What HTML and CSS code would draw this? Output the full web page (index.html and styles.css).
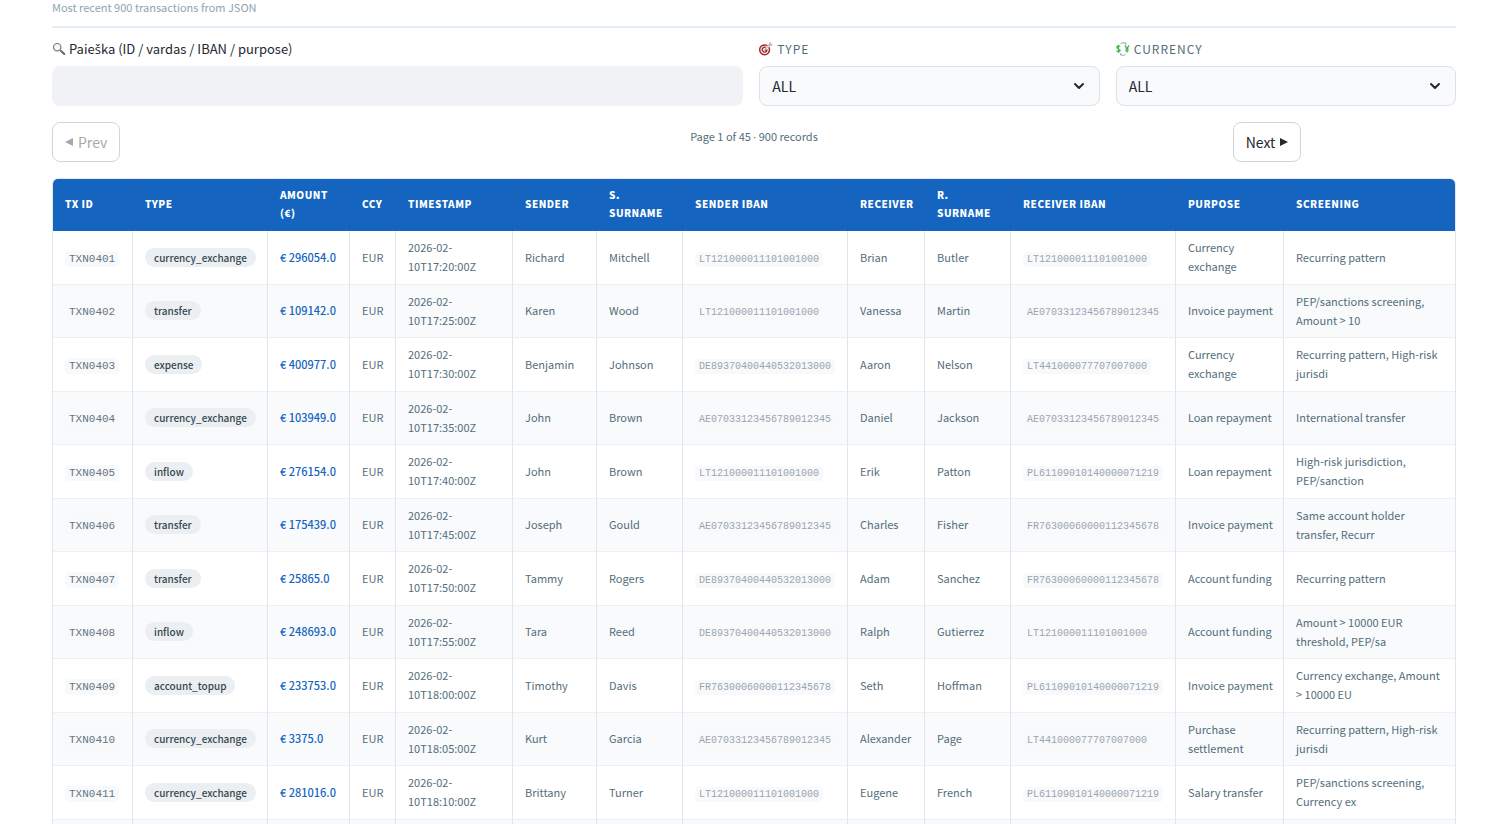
FILE: index.html
```html
<!DOCTYPE html>
<html lang="en">
  <head>
    <meta charset="UTF-8">
    <meta name="viewport" content="width=device-width, initial-scale=1">
    <title>Transactions</title>
    <link rel="stylesheet" href="styles.css">
  </head>
  <body>
    <div class="container">
      <p class="caption">Most recent 900 transactions from JSON</p>

      <div class="filters">
        <div class="field field-wide">
          <label for="search">
            <svg class="icon" viewBox="0 0 14 14"><circle cx="5.2" cy="5.2" r="3.7" fill="#f4f6f8" stroke="#777" stroke-width="1.2"/><path d="M8 8l1.5 1.5" stroke="#777" stroke-width="1.2"/><path d="M9.3 9.3l3 2.7" stroke="#666" stroke-width="2" stroke-linecap="round"/></svg>
            <span>Paie<span class="latin-ext">š</span>ka (ID / vardas / IBAN / purpose)</span>
          </label>
          <input id="search" type="text">
        </div>
        <div class="field">
          <label class="upper" for="type">
            <svg class="icon" viewBox="0 0 14 14"><circle cx="5.6" cy="7.8" r="4.9" fill="#fff" stroke="#a3262d" stroke-width="1.5"/><path d="M7.6 6.3a2.400 2.400 0 1 0 .4 1.800H5.600" fill="none" stroke="#a3262d" stroke-width="1.4"/><path d="M7 6.500l3.600-3.500" stroke="#fff" stroke-width="2"/><path d="M6.500 7l4.100-4" stroke="#8d5a5a" stroke-width=".7"/><path d="M10 3.600V1.600L11.400.4l.2 1.800 1.800.4-1.300 1.200z" fill="#c9ced2" stroke="#8f999f" stroke-width=".5"/></svg>
            Type
          </label>
          <div class="select">
            <select id="type"><option>ALL</option></select>
            <svg class="chevron" viewBox="0 0 12 12"><path d="M2 4l4 4 4-4" fill="none" stroke="#262730" stroke-width="2" stroke-linecap="round" stroke-linejoin="round"/></svg>
          </div>
        </div>
        <div class="field">
          <label class="upper" for="currency">
            <svg class="icon" viewBox="0 0 14 14"><g fill="none" stroke="#46b450" stroke-width="1.3"><path d="M4 4.900C3.600 3.800.8 3.700.8 5.300c0 1.700 3.300 1.200 3.300 3 0 1.700-3.200 1.600-3.600.3M2.400 2.800v8.200"/><path d="M9 3.400l2 3.400 2-3.400M11 6.800V10.500M9.400 7.200h3.200M9.400 8.800h3.200"/></g><path d="M4.500 1.800C6 .5 8.500.5 10 1.600M9.500 12.400c-1.500 1.200-4 1.200-5.300 0" fill="none" stroke="#8d9a96" stroke-width=".9"/><path d="M9.600.3l1.200 2-2.200.1zM4.900 13.500l-1.300-1.900 2.200-.1z" fill="#8d9a96"/></svg>
            Currency
          </label>
          <div class="select">
            <select id="currency"><option>ALL</option></select>
            <svg class="chevron" viewBox="0 0 12 12"><path d="M2 4l4 4 4-4" fill="none" stroke="#262730" stroke-width="2" stroke-linecap="round" stroke-linejoin="round"/></svg>
          </div>
        </div>
      </div>

      <div class="pager">
        <div class="pager-side">
          <button type="button" disabled><svg class="arrow" viewBox="0 0 8 8"><path d="M8 0v8L0 4z"/></svg>Prev</button>
        </div>
        <p class="pager-info">Page 1 of 45 <span class="dot">·</span> 900 records</p>
        <div class="pager-side">
          <button type="button">Next<svg class="arrow" viewBox="0 0 8 8"><path d="M0 0v8l8-4z"/></svg></button>
        </div>
      </div>

      <div class="table-wrap">
        <table>
          <colgroup>
            <col class="c-id"><col class="c-type"><col class="c-amount"><col class="c-ccy"><col class="c-time"><col class="c-name"><col class="c-surname"><col class="c-iban"><col class="c-receiver"><col class="c-surname"><col class="c-iban"><col class="c-purpose"><col>
          </colgroup>
          <thead>
            <tr><th>TX ID</th><th>Type</th><th>Amount (€)</th><th>CCY</th><th>Timestamp</th><th>Sender</th><th>S. Surname</th><th>Sender IBAN</th><th>Receiver</th><th>R. Surname</th><th>Receiver IBAN</th><th>Purpose</th><th>Screening</th></tr>
          </thead>
          <tbody>
            <tr><td><code>TXN0401</code></td><td><span class="badge">currency_exchange</span></td><td class="amount">€ 296054.0</td><td>EUR</td><td>2026-02-10T17:20:00Z</td><td>Richard</td><td>Mitchell</td><td><code class="iban">LT121000011101001000</code></td><td>Brian</td><td>Butler</td><td><code class="iban">LT121000011101001000</code></td><td>Currency exchange</td><td>Recurring pattern</td></tr>
            <tr><td><code>TXN0402</code></td><td><span class="badge">transfer</span></td><td class="amount">€ 109142.0</td><td>EUR</td><td>2026-02-10T17:25:00Z</td><td>Karen</td><td>Wood</td><td><code class="iban">LT121000011101001000</code></td><td>Vanessa</td><td>Martin</td><td><code class="iban">AE07033123456789012345</code></td><td>Invoice payment</td><td>PEP/sanctions screening, Amount &gt; 10</td></tr>
            <tr><td><code>TXN0403</code></td><td><span class="badge">expense</span></td><td class="amount">€ 400977.0</td><td>EUR</td><td>2026-02-10T17:30:00Z</td><td>Benjamin</td><td>Johnson</td><td><code class="iban">DE89370400440532013000</code></td><td>Aaron</td><td>Nelson</td><td><code class="iban">LT441000077707007000</code></td><td>Currency exchange</td><td>Recurring pattern, High-risk jurisdi</td></tr>
            <tr><td><code>TXN0404</code></td><td><span class="badge">currency_exchange</span></td><td class="amount">€ 103949.0</td><td>EUR</td><td>2026-02-10T17:35:00Z</td><td>John</td><td>Brown</td><td><code class="iban">AE07033123456789012345</code></td><td>Daniel</td><td>Jackson</td><td><code class="iban">AE07033123456789012345</code></td><td>Loan repayment</td><td>International transfer</td></tr>
            <tr><td><code>TXN0405</code></td><td><span class="badge">inflow</span></td><td class="amount">€ 276154.0</td><td>EUR</td><td>2026-02-10T17:40:00Z</td><td>John</td><td>Brown</td><td><code class="iban">LT121000011101001000</code></td><td>Erik</td><td>Patton</td><td><code class="iban">PL61109010140000071219</code></td><td>Loan repayment</td><td>High-risk jurisdiction, PEP/sanction</td></tr>
            <tr><td><code>TXN0406</code></td><td><span class="badge">transfer</span></td><td class="amount">€ 175439.0</td><td>EUR</td><td>2026-02-10T17:45:00Z</td><td>Joseph</td><td>Gould</td><td><code class="iban">AE07033123456789012345</code></td><td>Charles</td><td>Fisher</td><td><code class="iban">FR76300060000112345678</code></td><td>Invoice payment</td><td>Same account holder transfer, Recurr</td></tr>
            <tr><td><code>TXN0407</code></td><td><span class="badge">transfer</span></td><td class="amount">€ 25865.0</td><td>EUR</td><td>2026-02-10T17:50:00Z</td><td>Tammy</td><td>Rogers</td><td><code class="iban">DE89370400440532013000</code></td><td>Adam</td><td>Sanchez</td><td><code class="iban">FR76300060000112345678</code></td><td>Account funding</td><td>Recurring pattern</td></tr>
            <tr><td><code>TXN0408</code></td><td><span class="badge">inflow</span></td><td class="amount">€ 248693.0</td><td>EUR</td><td>2026-02-10T17:55:00Z</td><td>Tara</td><td>Reed</td><td><code class="iban">DE89370400440532013000</code></td><td>Ralph</td><td>Gutierrez</td><td><code class="iban">LT121000011101001000</code></td><td>Account funding</td><td>Amount &gt; 10000 EUR threshold, PEP/sa</td></tr>
            <tr><td><code>TXN0409</code></td><td><span class="badge">account_topup</span></td><td class="amount">€ 233753.0</td><td>EUR</td><td>2026-02-10T18:00:00Z</td><td>Timothy</td><td>Davis</td><td><code class="iban">FR76300060000112345678</code></td><td>Seth</td><td>Hoffman</td><td><code class="iban">PL61109010140000071219</code></td><td>Invoice payment</td><td>Currency exchange, Amount &gt; 10000 EU</td></tr>
            <tr><td><code>TXN0410</code></td><td><span class="badge">currency_exchange</span></td><td class="amount">€ 3375.0</td><td>EUR</td><td>2026-02-10T18:05:00Z</td><td>Kurt</td><td>Garcia</td><td><code class="iban">AE07033123456789012345</code></td><td>Alexander</td><td>Page</td><td><code class="iban">LT441000077707007000</code></td><td>Purchase settlement</td><td>Recurring pattern, High-risk jurisdi</td></tr>
            <tr><td><code>TXN0411</code></td><td><span class="badge">currency_exchange</span></td><td class="amount">€ 281016.0</td><td>EUR</td><td>2026-02-10T18:10:00Z</td><td>Brittany</td><td>Turner</td><td><code class="iban">LT121000011101001000</code></td><td>Eugene</td><td>French</td><td><code class="iban">PL61109010140000071219</code></td><td>Salary transfer</td><td>PEP/sanctions screening, Currency ex</td></tr>
            <tr><td></td><td></td><td></td><td></td><td></td><td></td><td></td><td></td><td></td><td></td><td></td><td></td><td></td></tr>
          </tbody>
        </table>
      </div>
    </div>
  </body>
</html>
```
FILE: styles.css
```css
* {
  box-sizing: border-box;
}
body {
  margin: 0;
  background: #fff;
  color: #262730;
  font: 14px/1.6 "Source Sans Pro", "Noto Sans CJK SC", sans-serif;
}
.container {
  padding: 0 42px 0 52px;
}
p {
  margin: 0;
}
.caption {
  padding-bottom: 11px;
  border-bottom: 2px solid #e3eef7;
  color: #90a4ae;
  font-size: 11px;
  line-height: 15px;
}

/* filters */
.filters {
  display: flex;
  gap: 16px;
  margin-top: 10px;
}
.field {
  flex: 1 1 calc(25% - 16px);
}
.field-wide {
  flex-basis: calc(50% - 16px);
}
.field label {
  display: flex;
  align-items: center;
  gap: 3px;
  height: 22px;
  margin-bottom: 6px;
  font-size: 13px;
}
.field label.upper {
  gap: 4px;
  color: #546e7a;
  font-size: 12px;
  letter-spacing: 1px;
  text-transform: uppercase;
}
.icon {
  width: 14px;
  height: 14px;
}
.field input,
.field select {
  display: block;
  width: 100%;
  height: 40px;
  padding: 0 12px;
  border: 1px solid #dde2e8;
  border-radius: 8px;
  background: #f8fafc;
  color: #262730;
  font: inherit;
  appearance: none;
}
.field input {
  border-color: #f0f2f6;
  background: #f0f2f6;
}
.select {
  position: relative;
}
.chevron {
  position: absolute;
  top: 14px;
  right: 15px;
  width: 12px;
  height: 12px;
  pointer-events: none;
}

/* pager */
.pager {
  display: flex;
  gap: 16px;
  margin: 16px 0;
}
.pager-side {
  flex: 1 1 calc(16.66% - 16px);
}
.pager-info {
  flex: 1 1 calc(66.66% - 16px);
  padding-top: 6px;
  color: #546e7a;
  font-size: 11px;
  text-align: center;
}
.dot,
.latin-ext {
  font-family: "Open Sans", sans-serif;
}
.pager button {
  display: flex;
  align-items: center;
  gap: 5px;
  height: 40px;
  padding: 0 12px;
  border: 1px solid #d3d5da;
  border-radius: 8px;
  background: #fff;
  color: #262730;
  font: inherit;
}
.pager button:disabled {
  color: #a8a9ad;
}
.arrow {
  width: 8px;
  height: 8px;
  fill: currentColor;
}

/* transactions */
.table-wrap {
  overflow: hidden;
  border: 1px solid #e0e6eb;
  border-radius: 6px;
}
table {
  width: 100%;
  border-collapse: separate;
  border-spacing: 0;
  table-layout: fixed;
  color: #546e7a;
  font-size: 11px;
  line-height: 1.75;
}
th,
td {
  padding: 7px 10px 7px 12px;
  border-right: 1px solid #e0e5ea;
  border-bottom: 1px solid #eceff3;
  text-align: left;
  vertical-align: middle;
}
th:last-child,
td:last-child {
  border-right: none;
}
th {
  padding-bottom: 9px;
  border-right-color: #1d5fb0;
  border-bottom: none;
  background: #1565c0;
  color: #fff;
  font-size: 10px;
  font-weight: 900;
  line-height: 18px;
  letter-spacing: 0.05em;
  text-transform: uppercase;
}
tbody tr:nth-child(even) {
  background: #f8fafc;
}
.c-id { width: 80px; }
.c-type { width: 135px; }
.c-amount { width: 82px; }
.c-ccy { width: 46px; }
.c-time { width: 117px; }
.c-name { width: 84px; }
.c-surname { width: 86px; }
.c-iban { width: 165px; }
.c-receiver { width: 77px; }
.c-purpose { width: 108px; }
.amount {
  color: #1565c0;
  font-weight: 500;
  white-space: nowrap;
}
.badge {
  display: inline-block;
  padding: 0 9px;
  border-radius: 10px;
  background: #eceff1;
  color: #37474f;
  font-size: 10px;
  font-weight: 500;
  line-height: 19px;
}
code {
  padding: 2px 4px;
  border-radius: 4px;
  background: #f8f9fb;
  color: #66757f;
  font: 11px/1 "Liberation Mono", monospace;
}
code.iban {
  color: #98a5b0;
  font-size: 10px;
}
```
